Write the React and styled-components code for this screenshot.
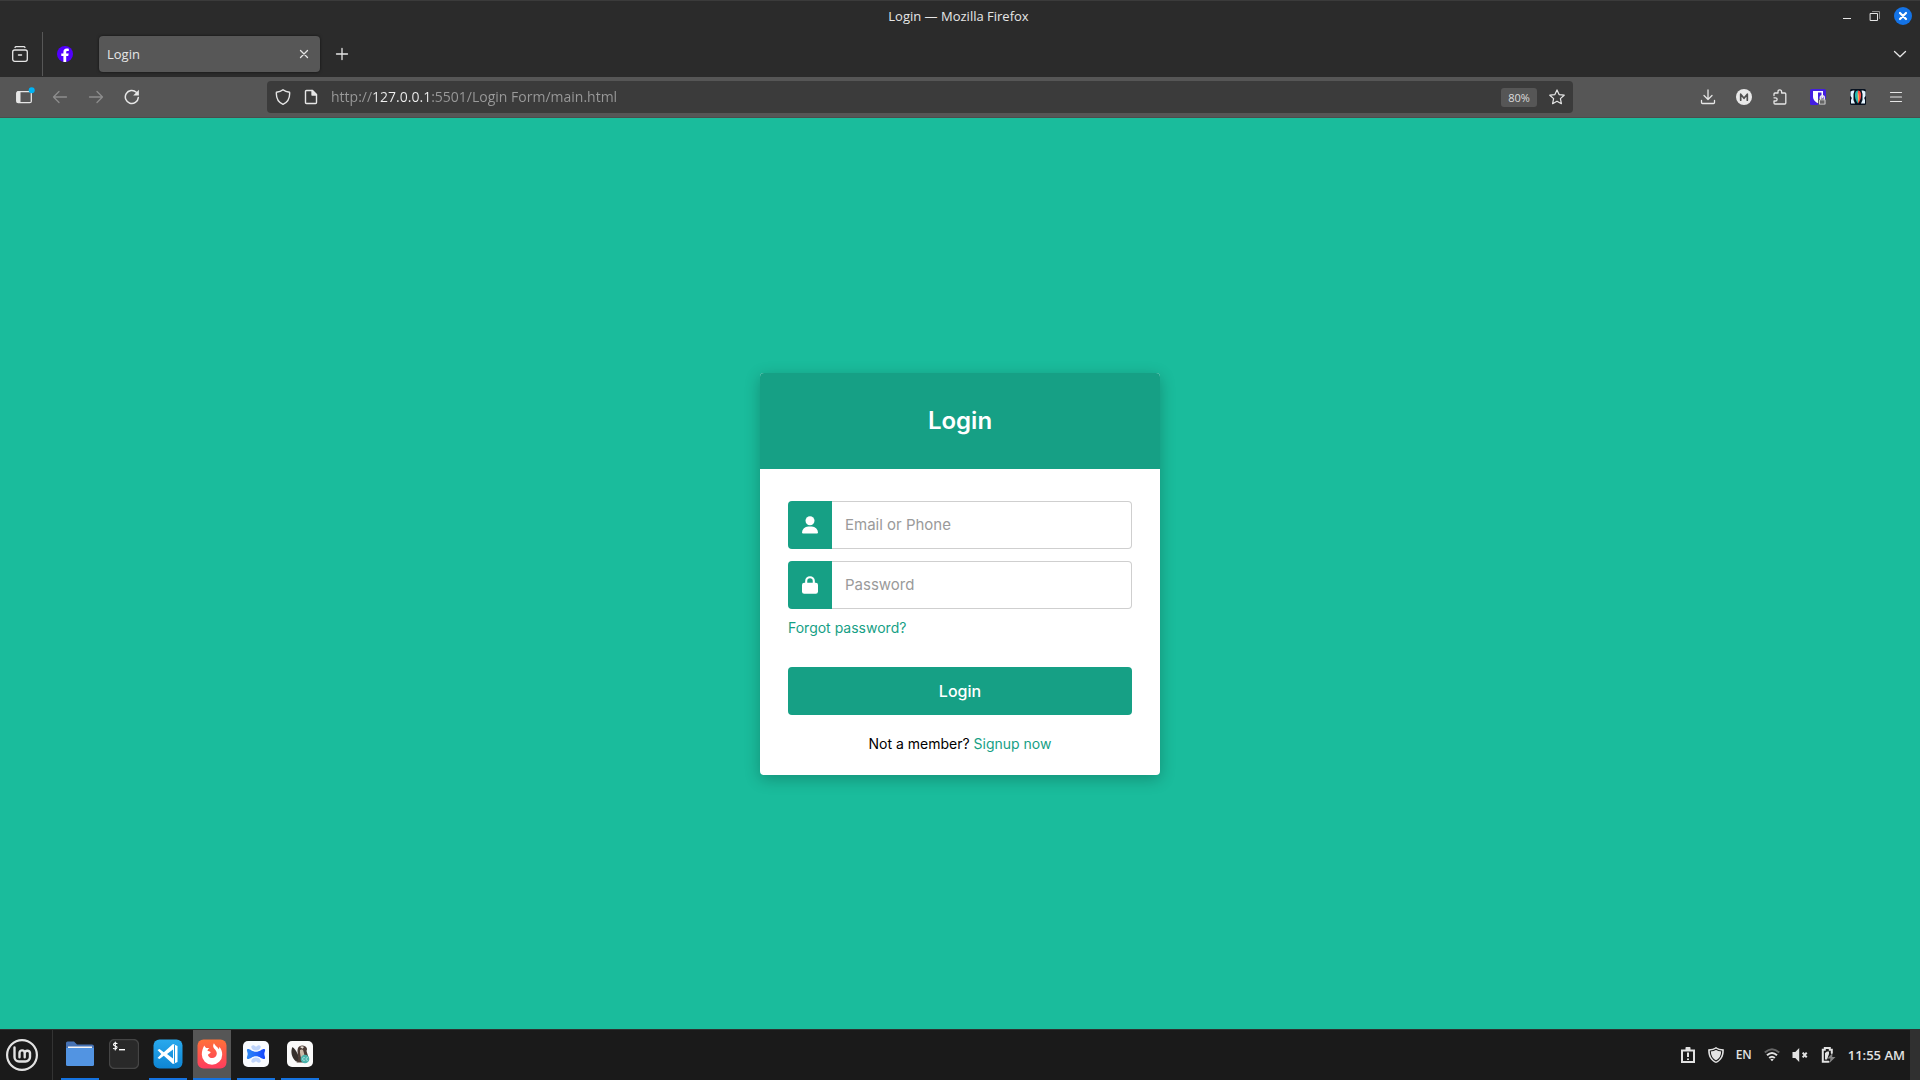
import React from "react";
import styled, { createGlobalStyle } from "styled-components";

const UI = `"Open Sans", "Noto Sans", sans-serif`;
const FORM = `Inter, Roboto, sans-serif`;

const GlobalStyle = createGlobalStyle`
  *, *::before, *::after { box-sizing: border-box; }
  body { margin: 0; background: #1abc9c; font-family: ${UI}; }
  button, input { font-family: inherit; }
  button { border: 0; padding: 0; background: none; color: inherit; cursor: pointer; }
  a { text-decoration: none; }
  svg { display: block; flex: none; }
`;

const Desktop = styled.div`
  display: flex;
  flex-direction: column;
  min-height: 100vh;
`;

const Chrome = styled.header`
  background: #2b2b2b;
  border-top: 1px solid #3b3b3b;
  color: #e6e6e6;
`;

const TitleBar = styled.div`
  display: grid;
  grid-template-columns: 1fr auto 1fr;
  align-items: center;
  height: 30px;
  padding-right: 3px;
`;

const WindowTitle = styled.div`
  grid-column: 2;
  font-size: 13px;
  line-height: 20px;
`;

const WindowControls = styled.div`
  display: flex;
  justify-content: flex-end;
`;

const IconButton = styled.button`
  display: flex;
  align-items: center;
  justify-content: center;
  width: ${(p) => p.$w || 36}px;
  height: ${(p) => p.$h || 36}px;
  color: ${(p) => (p.$dim ? "#8d8d8d" : "#e6e6e6")};
`;

const TabStrip = styled.div`
  display: flex;
  align-items: center;
  height: 46px;
`;

const RecentSlot = styled.div`
  display: flex;
  align-items: center;
  height: 44px;
  padding: 0 3px 0 1px;
  border-right: 1px solid #575757;
`;

const Tab = styled.div`
  display: flex;
  align-items: center;
  justify-content: space-between;
  width: 221px;
  height: 36px;
  margin: 0 4px 0 12px;
  padding: 0 4px 0 8px;
  border-radius: 4px;
  background: #575757;
  box-shadow: 0 0 3px rgba(0, 0, 0, 0.6);
  font-size: 13px;
`;

const TabTitle = styled.span`
  line-height: 20px;
`;

const Grow = styled.div`
  flex: 1;
`;

const Toolbar = styled.div`
  display: flex;
  align-items: center;
  height: 41px;
  padding: 0 6px;
  background: #565656;
  border-bottom: 1px solid #4c4c4c;
`;

const ToolbarSpring = styled.div`
  flex: 0 1 117px;
`;

const AddressBar = styled.div`
  display: flex;
  flex: 1;
  align-items: center;
  gap: 12px;
  height: 32px;
  padding: 0 8px;
  border-radius: 4px;
  background: #3b3b3b;
  color: #e6e6e6;
`;

const AddressInput = styled.input`
  flex: 1;
  min-width: 0;
  height: 28px;
  padding: 0 0 2px;
  border: 0;
  outline: 0;
  font-size: 14px;
  color: transparent;
  background: linear-gradient(
    90deg,
    #9a9a9a 41px,
    #f0f0f0 41px,
    #f0f0f0 98px,
    #9a9a9a 98px
  );
  -webkit-background-clip: text;
  background-clip: text;
`;

const ZoomBadge = styled.button`
  width: 36px;
  height: 19px;
  border-radius: 3px;
  background: #565656;
  color: #dcdcdc;
  font-size: 11px;
  line-height: 19px;
`;

const Page = styled.main`
  display: flex;
  flex: 1;
  align-items: center;
  justify-content: center;
  background: #1abc9c;
  font-family: ${FORM};
`;

const Card = styled.section`
  width: 400px;
  border-radius: 4px;
  background: #fff;
  box-shadow: 0 4px 16px rgba(0, 0, 0, 0.24);
`;

const CardTitle = styled.h1`
  margin: 0;
  border-radius: 4px 4px 0 0;
  background: #16a085;
  color: #fff;
  font-size: 24px;
  font-weight: 600;
  line-height: 96px;
  text-align: center;
`;

const LoginForm = styled.form`
  display: flex;
  flex-direction: column;
  padding: 32px 28px 19px;
`;

const Field = styled.div`
  display: flex;
  height: 48px;
  margin-bottom: ${(p) => (p.$last ? 7 : 12)}px;
`;

const FieldIcon = styled.label`
  display: flex;
  align-items: center;
  justify-content: center;
  width: 44px;
  border-radius: 4px 0 0 4px;
  background: #16a085;
  color: #fff;
`;

const FieldInput = styled.input`
  flex: 1;
  min-width: 0;
  padding: 0 13px;
  border: 1px solid #cfcfcf;
  border-left: 0;
  border-radius: 0 4px 4px 0;
  outline: 0;
  background: #fff;
  font-size: 15px;
  &::placeholder { color: #9a9a9a; opacity: 1; }
`;

const TextLink = styled.a`
  color: #16a085;
  font-size: 14px;
  line-height: 24px;
`;

const ForgotRow = styled.div`
  display: flex;
  margin-bottom: 27px;
`;

const SubmitButton = styled.button`
  height: 48px;
  border-radius: 4px;
  background: #16a085;
  color: #fff;
  font-size: 16px;
  font-weight: 500;
`;

const SignupRow = styled.p`
  margin: 17px 0 0;
  color: #000;
  font-size: 14px;
  line-height: 24px;
  text-align: center;
`;

const Taskbar = styled.footer`
  display: flex;
  align-items: stretch;
  height: 51px;
  border-top: 1px solid #303030;
  background: #1a1a1a;
  color: #e2e2e2;
`;

const MenuSlot = styled.div`
  display: flex;
  align-items: center;
  width: 53px;
  padding-left: 5px;
  border-right: 1px solid #333;
`;

const AppList = styled.nav`
  display: flex;
  gap: 6px;
  margin-left: 8px;
`;

const AppButton = styled.button`
  display: flex;
  align-items: center;
  justify-content: center;
  width: 38px;
  border-bottom: 2px solid ${(p) => (p.$open ? "#1573e0" : "transparent")};
  background: ${(p) => (p.$active ? "#565656" : "transparent")};
`;

const Tray = styled.div`
  display: flex;
  align-items: center;
  margin-left: auto;
  gap: 12px;
  font-weight: 600;
`;

const TrayText = styled.span`
  font-size: ${(p) => p.$size}px;
  line-height: 20px;
`;

const ShowDesktop = styled.button`
  width: 10px;
  margin-left: 5px;
  background: #303030;
`;

const Svg = ({ s = 16, w, h, box = "0 0 16 16", children, ...rest }) => (
  <svg width={w || s} height={h || s} viewBox={box} fill="none" stroke="currentColor"
    strokeWidth="1.3" strokeLinecap="round" strokeLinejoin="round" aria-hidden="true" {...rest}>
    {children}
  </svg>
);

const MinimizeIcon = () => (
  <Svg s={18} box="0 0 18 18"><path d="M5 11.5h8" strokeLinecap="butt" strokeWidth="1" /></Svg>
);
const RestoreIcon = () => (
  <Svg s={18} box="0 0 18 18" strokeWidth="1" strokeLinejoin="miter">
    <path d="M4.5 6.5h7v7h-7z" />
    <path d="M6.500 4.500h7v7" stroke="#8f8f8f" />
  </Svg>
);
const CloseWindowIcon = () => (
  <Svg s={18} box="0 0 18 18">
    <circle cx="9" cy="9" r="9" fill="#1473e6" stroke="none" />
    <path d="M6 6l6 6M12 6l-6 6" stroke="#fff" strokeWidth="2.2" />
  </Svg>
);
const RecentIcon = () => (
  <Svg>
    <path d="M3 1.500q.3-.8 1.200-.8h7.600q.9 0 1.200.8" />
    <rect x=".7" y="4" width="14.600" height="11.300" rx="2" />
    <path d="M6.500 9h3" strokeWidth="1.500" />
  </Svg>
);
const FaviconF = () => (
  <Svg stroke="none">
    <circle cx="8" cy="8" r="8" fill="#5200ff" />
    <path fill="#fff" d="M6.400 16V10H4.300V7.400h2.100V6.200c0-2.400 1.200-3.600 3.400-3.600.7 0 1.600.1 2 .2V5H10.500c-1 0-1.300.5-1.300 1.300v1.100h2.500L11.200 10h-2v6z" />
  </Svg>
);
const CloseIcon = () => <Svg><path d="M4.500 4.500l7 7M11.500 4.500l-7 7" /></Svg>;
const PlusIcon = () => <Svg><path d="M8 2.500v11M2.500 8h11" /></Svg>;
const ChevronIcon = () => <Svg><path d="M2.500 5.500L8 10.700l5.500-5.200" /></Svg>;
const SidebarIcon = () => (
  <Svg w={22} h={22} box="0 0 22 22">
    <rect x="3.700" y="5.700" width="14.600" height="11" rx="1.500" />
    <path d="M4 5.500h3.500v11.300H4z" fill="currentColor" stroke="none" />
    <circle cx="18.700" cy="4.300" r="3" fill="#00b3f4" stroke="none" />
  </Svg>
);
const BackIcon = () => <Svg><path d="M14.500 8h-13M7 2.500L1.500 8 7 13.500" /></Svg>;
const ForwardIcon = () => <Svg><path d="M1.500 8h13M9 2.500L14.500 8 9 13.500" /></Svg>;
const ReloadIcon = () => (
  <Svg>
    <path d="M14.300 8.600A6.500 6.500 0 1 1 12.300 3.300" strokeWidth="1.500" />
    <path d="M14.900.8v5.700H9.200z" fill="currentColor" stroke="none" />
  </Svg>
);
const ShieldIcon = () => (
  <Svg><path d="M8 .8c1.800 1.500 3.900 2.200 6.600 2.500.4 5.600-1.700 9.800-6.600 12C3.100 13.100 1 8.900 1.400 3.300 4.100 3 6.200 2.300 8 .8z" strokeWidth="1.400" /></Svg>
);
const DocumentIcon = () => (
  <Svg>
    <path d="M3.500 1.500h6l4 4v8q0 1-1 1h-9q-1 0-1-1v-11q0-1 1-1z" strokeWidth="1.400" />
    <path d="M9 1.500V6h4.500z" fill="currentColor" />
  </Svg>
);
const StarIcon = () => (
  <Svg><path d="M8 .9l2.100 4.700 5.100.6-3.800 3.400 1 5.100L8 12.200l-4.400 2.500 1-5.100L.8 6.200l5.100-.6z" strokeWidth="1.200" /></Svg>
);
const DownloadIcon = () => (
  <Svg><path d="M8 1v9M4 6.500l4 4 4-4M1.500 11.500v2q0 1 1 1h11q1 0 1-1v-2" /></Svg>
);
const AccountIcon = () => (
  <Svg>
    <circle cx="8" cy="8" r="8" fill="#e8e8e8" stroke="none" />
    <path d="M4.700 11.200V5.200L8 9.300l3.300-4.100v6" stroke="#505050" strokeWidth="1.700" />
  </Svg>
);
const PuzzleIcon = () => (
  <Svg><path d="M2 6.500V5q0-1 1-1h3V2.800Q6 .8 7.800.8T9.600 2.800V4h3.200q1 0 1 1v9q0 1-1 1H3q-1 0-1-1v-2h1.300q1.800 0 1.800-1.600T3.300 8.800H2" /></Svg>
);
const VaultIcon = () => (
  <Svg stroke="none">
    <rect width="16" height="16" rx="1.500" fill="#431ee0" />
    <path d="M3 2h10v6c0 3-2.400 5-5 6.300C5.400 13 3 11 3 8z" fill="#fff" />
    <path d="M8 3.500h3.500V8c0 1.800-1.500 3.300-3.500 4.400z" fill="#431ee0" />
    <rect x="8.500" y="10" width="7.500" height="6" rx="1" fill="#cfcfcf" stroke="#444" strokeWidth=".8" />
    <path d="M10.300 10V8.700a2 2 0 0 1 4 0V10" stroke="#e8e8e8" strokeWidth="1.500" fill="none" />
    <path d="M10 11.300h4.500v3.400H10z" fill="#666" />
  </Svg>
);
const RobotIcon = () => (
  <Svg stroke="none">
    <rect width="16" height="16" rx="1.500" fill="#07111f" />
    <path d="M.5 2.500L3 1.500h1.500L3.500 5v6l1.500 3.500H1V11l.8-2L.5 7z" fill="#e4f4ff" />
    <path d="M15.500 2.500L13 1.500h-1.500l1 3.500v6L11 14.500h4V11l-.8-2 1.300-2z" fill="#e4f4ff" />
    <path d="M8 1.500C5.300 1.500 4.700 4.500 5 7.500S6.700 13 8 14.500z" fill="#20b8b4" />
    <path d="M8 1.500c2.700 0 3.300 3 3 6S9.300 13 8 14.500z" fill="#ff5148" />
    <path d="M7.500 3c2 2.200 2 7.500.5 10z" fill="#ffab54" />
  </Svg>
);
const MenuIcon = () => <Svg><path d="M2.500 3.500h11M2.500 8h11M2.500 12.500h11" strokeWidth="1.200" /></Svg>;

const UserIcon = () => (
  <Svg w={16} h={18} box="0 0 16 18" role="img" aria-hidden={undefined} aria-label="Email or Phone" stroke="none" fill="currentColor">
    <circle cx="8" cy="4.700" r="4.500" />
    <path d="M6.300 10.400h3.400A6.200 6.200 0 0 1 16 16.500q0 1.100-1.100 1.100H1.100Q0 17.600 0 16.500a6.200 6.200 0 0 1 6.300-6.100z" />
  </Svg>
);
const LockIcon = () => (
  <Svg w={16} h={18} box="0 0 16 18" role="img" aria-hidden={undefined} aria-label="Password" stroke="none">
    <path d="M4.200 8V5a3.800 3.800 0 0 1 7.600 0v3" stroke="currentColor" strokeWidth="2.100" />
    <rect y="6.700" width="16" height="11" rx="2.200" fill="currentColor" />
  </Svg>
);

const MintIcon = () => (
  <Svg s={34} box="0 0 34 34" stroke="#e2e2e2" strokeWidth="2.400">
    <circle cx="17" cy="17" r="14.900" strokeWidth="2.200" />
    <path d="M9.500 9.500v9.500a4.500 4.500 0 0 0 4.500 4.500h6.500a4.500 4.500 0 0 0 4.500-4.500v-4a2.700 2.700 0 0 0-5.300 0v4.200M19.700 15a2.600 2.600 0 0 0-5.200 0v4.200" />
  </Svg>
);
const FolderIcon = () => (
  <Svg w={28} h={26} box="0 0 28 26" stroke="none">
    <path d="M0 2Q0 .5 1.500.5H8L11 3.500h15q2 0 2 2V12H0z" fill="#4672b4" />
    <path d="M2 5.500h24V9H2z" fill="#f5f5f5" />
    <path d="M0 7h28v16.500q0 1.500-1.500 1.500h-25Q0 25 0 23.500z" fill="#5294e2" />
  </Svg>
);
const TerminalIcon = () => (
  <Svg s={30} box="0 0 30 30" stroke="none">
    <rect x=".5" y=".5" width="29" height="29" rx="5" fill="#292929" stroke="#454545" />
    <path d="M8 4.500Q5.500 3.500 4.700 5T6.300 7t1.500 2T4.500 9.500M6.300 3v8" stroke="#fff" strokeWidth="1.100" />
    <path d="M10 10.700h6" stroke="#fff" strokeWidth="1.400" strokeLinecap="butt" />
  </Svg>
);
const CodeIcon = () => (
  <Svg s={30} box="0 0 30 30" stroke="none">
    <defs>
      <linearGradient id="code" x1="0" y1="0" x2="0" y2="1">
        <stop stopColor="#29a9ed" /><stop offset="1" stopColor="#0e85d4" />
      </linearGradient>
    </defs>
    <rect x=".5" y=".5" width="29" height="29" rx="6" fill="url(#code)" />
    <path d="M20 5l4.500 2v16L20 25 10.800 16.800 6.500 20 4.500 18.900 8.300 15 4.500 11.100 6.500 10l4.300 3.200zM20 10.500L14 15l6 4.500z" fill="#fff" fillRule="evenodd" />
    <path d="M21.500 6.500v17" stroke="#1c98df" strokeWidth="1" />
  </Svg>
);
const FirefoxIcon = () => (
  <Svg s={30} box="0 0 30 30" stroke="none">
    <defs>
      <linearGradient id="fox" x1="0" y1="0" x2="0" y2="1">
        <stop stopColor="#ff7139" /><stop offset="1" stopColor="#ff3c5e" />
      </linearGradient>
    </defs>
    <rect x=".5" y=".5" width="29" height="29" rx="6" fill="url(#fox)" />
    <path d="M7.300 6.500c.5 1.200 1.100 2 2 2.600 1-.2 2-.2 3 0-1 .8-1.700 1.700-1.900 2.600l2.300.8c.7.200 1 .7.800 1.300-.5.900-2 1.100-2.600 2.100.7 2 2.200 3.200 4.300 3.200 2.600 0 4.600-2 4.600-4.600 0-2.300-1.400-3.600-2.700-5-1.200-1.400-1.300-3.300-.2-5.200.8 1.600 1.900 2.600 3.200 3.700.9.800 1.400 1.500 1.700 2.300.5-.8.600-1.600.5-2.500 2 2.200 3 4.900 2.900 7.900A10.200 10.200 0 0 1 15 25.800 10.200 10.200 0 0 1 4.800 15.600c0-3.600 1-6.400 2.500-9.100z" fill="#fff" />
  </Svg>
);
const ButterflyIcon = () => (
  <Svg s={26} box="0 0 26 26" stroke="none">
    <defs>
      <linearGradient id="wing" x1="0" y1="0" x2="1" y2="0">
        <stop stopColor="#2f8af5" /><stop offset="1" stopColor="#1546ff" />
      </linearGradient>
    </defs>
    <rect width="26" height="26" rx="5" fill="#f9fbff" />
    <path d="M8.500 5c1.500-1.300 3-.4 4.500.8C14.500 4.600 16 3.700 17.500 5c1 2-1.500 4.500-4.500 4.500S7.500 7 8.500 5zM8.500 21c1.500 1.300 3 .4 4.500-.8 1.500 1.200 3 2.100 4.500.8 1-2-1.500-4.500-4.500-4.500S7.500 19 8.500 21z" fill="#bfd4fb" />
    <path d="M4.500 8c2.500-.5 4.500 2.700 8.500 2.700S19 7.500 21.500 8c1.500 1-.2 3-.2 5s1.700 4 .2 5c-2.500.5-4.500-2.700-8.500-2.700S7 18.500 4.500 18c-1.500-1 .2-3 .2-5s-1.700-4-.2-5z" fill="url(#wing)" />
  </Svg>
);
const BeaverIcon = () => (
  <Svg s={26} box="0 0 26 26" stroke="none">
    <rect width="26" height="26" rx="5" fill="#fafafa" />
    <path d="M5.500 6C3.500 9.500 4 16.500 9 20.500h4C12 15 9.500 9 5.500 6z" fill="#36302d" />
    <path d="M11 7c1-2.500 4.500-3.500 7.500-1.500 1.500 1 2 3 1 4.300.5 2.500 1.500 4.500 2 7-.5 3-3 4.700-6 4.700H9.500c2-2.500 1.800-4.700 1.500-7.500-.3-2.500-1-4.500 0-7z" fill="#4b3b35" />
    <path d="M13 9c1.300-1 2.800-.5 3.200.5.800 2.300 1 4 1.500 6-1.500.7-2.700 2-3.200 3.500-.7-3.500-1.800-6.500-1.500-10z" fill="#cbb9a8" />
    <path d="M13 6q2-1.500 4 0l-1.500 1.800z" fill="#e8e0d8" />
    <circle cx="18" cy="18" r="4.300" fill="#4bb3ac" />
    <path d="M17.500 16.500q-2-.3-2 1.500t2 1.500M20.500 16.500q-1.500 0-1.500 1.500t1.500 1.500" stroke="#a5deda" strokeWidth=".9" />
  </Svg>
);

const ReportIcon = () => (
  <Svg stroke="none">
    <path d="M1 2.500h4.500V.8q0-.8.800-.8h3.400q.8 0 .8.800v1.700H15V16H1zM3 4.500V14h10V4.500z" fillRule="evenodd" fill="currentColor" />
    <path d="M8 5.500v4.500M8 11.500v1.500" stroke="currentColor" strokeWidth="2" strokeLinecap="butt" />
  </Svg>
);
const UpdateIcon = () => (
  <Svg stroke="none">
    <path d="M8 0c2 1.500 4.600 2.200 7.800 2.200C16.300 8.800 13.600 13.800 8 16 2.400 13.800-.3 8.800.2 2.200 3.400 2.200 6 1.500 8 0z" fill="currentColor" />
    <path d="M8 2.200c1.500 1 3.300 1.600 5.700 1.800.1 4.600-1.700 8-5.700 9.900-4-1.900-5.800-5.300-5.700-9.900C4.700 3.800 6.500 3.200 8 2.200z" stroke="#1a1a1a" strokeWidth="1.100" />
  </Svg>
);
const WifiIcon = () => (
  <Svg strokeWidth="2" strokeLinecap="butt">
    <path d="M.8 5.500Q8-1 15.200 5.500" stroke="#666" />
    <path d="M3 8.300q5-4.600 10 0M5.200 11q2.800-2.500 5.600 0" />
    <path d="M6.300 12.400L8 14.300l1.700-1.900q-1.700-1.200-3.400 0z" fill="currentColor" stroke="none" />
  </Svg>
);
const MutedIcon = () => (
  <Svg>
    <path d="M.5 5h2.800L7.200 1v14L3.300 11H.5z" fill="currentColor" stroke="none" />
    <path d="M10.700 5.700l4 4.600M14.700 5.700l-4 4.600" strokeWidth="2" strokeLinecap="butt" />
  </Svg>
);
const BatteryIcon = () => (
  <Svg strokeLinejoin="miter">
    <path d="M8.500 14.700H2.800V2.700h2V1h5v1.700h2V6" strokeWidth="2" />
    <path d="M5 6l2-1.500h2V7L7 12.500H5z" fill="currentColor" stroke="none" />
    <path d="M12.500 6L7.500 11.500h3L9.500 16l6-6h-3.300z" fill="#858585" stroke="none" />
  </Svg>
);

const apps = [
  { name: "Files", Icon: FolderIcon, open: true },
  { name: "Terminal", Icon: TerminalIcon },
  { name: "Code editor", Icon: CodeIcon, open: true },
  { name: "Firefox", Icon: FirefoxIcon, open: true, active: true },
  { name: "Butterfly", Icon: ButterflyIcon, open: true },
  { name: "DBeaver", Icon: BeaverIcon, open: true },
];

export default function App() {
  return (
    <Desktop>
      <GlobalStyle />
      <Chrome>
        <TitleBar>
          <WindowTitle>Login — Mozilla Firefox</WindowTitle>
          <WindowControls>
            <IconButton $w={28} $h={28} aria-label="Minimize"><MinimizeIcon /></IconButton>
            <IconButton $w={28} $h={28} aria-label="Restore"><RestoreIcon /></IconButton>
            <IconButton $w={28} $h={28} aria-label="Close window"><CloseWindowIcon /></IconButton>
          </WindowControls>
        </TitleBar>
        <TabStrip>
          <RecentSlot>
            <IconButton $w={38} aria-label="Recent browsing"><RecentIcon /></IconButton>
          </RecentSlot>
          <IconButton $w={44} aria-label="Pinned tab"><FaviconF /></IconButton>
          <Tab>
            <TabTitle>Login</TabTitle>
            <IconButton $w={24} $h={24} aria-label="Close tab"><CloseIcon /></IconButton>
          </Tab>
          <IconButton aria-label="New tab"><PlusIcon /></IconButton>
          <Grow />
          <IconButton $w={40} aria-label="List all tabs"><ChevronIcon /></IconButton>
        </TabStrip>
        <Toolbar>
          <IconButton aria-label="Sidebar"><SidebarIcon /></IconButton>
          <IconButton $dim aria-label="Back"><BackIcon /></IconButton>
          <IconButton $dim aria-label="Forward"><ForwardIcon /></IconButton>
          <IconButton aria-label="Reload"><ReloadIcon /></IconButton>
          <ToolbarSpring />
          <AddressBar>
            <ShieldIcon />
            <DocumentIcon />
            <AddressInput aria-label="Address" defaultValue="http://127.0.0.1:5501/Login Form/main.html" spellCheck={false} />
            <ZoomBadge>80%</ZoomBadge>
            <StarIcon />
          </AddressBar>
          <ToolbarSpring />
          <IconButton aria-label="Downloads"><DownloadIcon /></IconButton>
          <IconButton aria-label="Account"><AccountIcon /></IconButton>
          <IconButton aria-label="Extensions"><PuzzleIcon /></IconButton>
          <IconButton $w={40} aria-label="Password vault"><VaultIcon /></IconButton>
          <IconButton $w={40} aria-label="Add-on"><RobotIcon /></IconButton>
          <IconButton aria-label="Menu"><MenuIcon /></IconButton>
        </Toolbar>
      </Chrome>

      <Page>
        <Card>
          <CardTitle>Login</CardTitle>
          <LoginForm onSubmit={(e) => e.preventDefault()}>
            <Field>
              <FieldIcon htmlFor="email"><UserIcon /></FieldIcon>
              <FieldInput id="email" type="text" placeholder="Email or Phone" />
            </Field>
            <Field $last>
              <FieldIcon htmlFor="password"><LockIcon /></FieldIcon>
              <FieldInput id="password" type="password" placeholder="Password" />
            </Field>
            <ForgotRow><TextLink href="#forgot">Forgot password?</TextLink></ForgotRow>
            <SubmitButton type="submit">Login</SubmitButton>
            <SignupRow>Not a member? <TextLink href="#signup">Signup now</TextLink></SignupRow>
          </LoginForm>
        </Card>
      </Page>

      <Taskbar>
        <MenuSlot>
          <IconButton $w={34} $h={34} aria-label="Start menu"><MintIcon /></IconButton>
        </MenuSlot>
        <AppList aria-label="Applications">
          {apps.map(({ name, Icon, open, active }) => (
            <AppButton key={name} $open={open} $active={active} aria-label={name}><Icon /></AppButton>
          ))}
        </AppList>
        <Tray>
          <ReportIcon />
          <UpdateIcon />
          <TrayText $size={12}>EN</TrayText>
          <WifiIcon />
          <MutedIcon />
          <BatteryIcon />
          <TrayText $size={13}>11:55 AM</TrayText>
        </Tray>
        <ShowDesktop aria-label="Show desktop" />
      </Taskbar>
    </Desktop>
  );
}
